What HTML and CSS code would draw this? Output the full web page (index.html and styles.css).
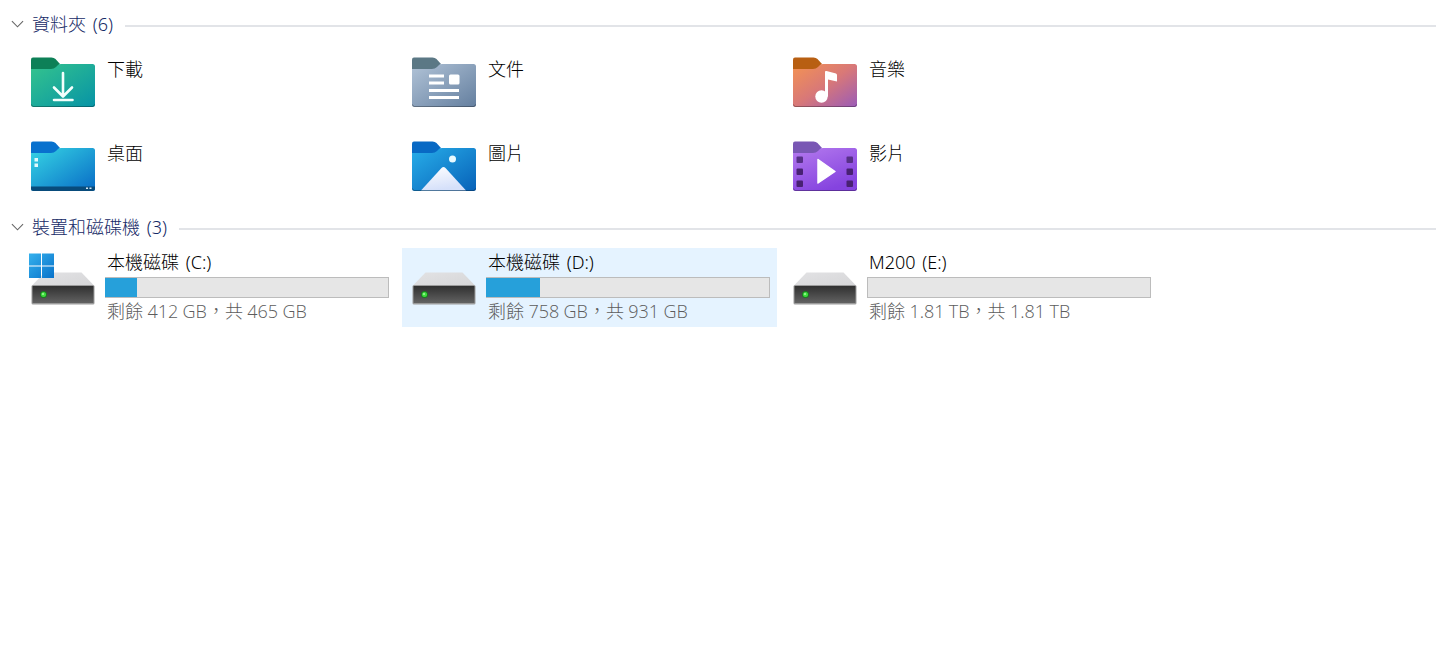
FILE: index.html
```html
<!DOCTYPE html>
<html lang="zh-Hant">

<head>
    <meta charset="utf-8">
    <title>本機</title>
    <meta name="viewport" content="width=device-width, initial-scale=1">
    <link rel="stylesheet" href="styles.css">
</head>

<body>
    <!-- shapes and gradients used by several icons -->
    <svg class="defs" width="0" height="0">
        <defs>
            <linearGradient id="green" x1="0" y1="0" x2="1" y2="1">
                <stop offset="0" stop-color="#34c48d" />
                <stop offset="1" stop-color="#0793a6" />
            </linearGradient>
            <linearGradient id="gray" x1="0" y1="0" x2="1" y2="1">
                <stop offset="0" stop-color="#b1c3d7" />
                <stop offset="1" stop-color="#647f9f" />
            </linearGradient>
            <linearGradient id="orange" x1="0" y1="0" x2="1" y2="1">
                <stop offset="0" stop-color="#f49352" />
                <stop offset="0.5" stop-color="#d87878" />
                <stop offset="1" stop-color="#9a5bb8" />
            </linearGradient>
            <linearGradient id="cyan" x1="0" y1="0" x2="1" y2="1">
                <stop offset="0" stop-color="#36d5e4" />
                <stop offset="1" stop-color="#086bc6" />
            </linearGradient>
            <linearGradient id="blue" x1="0" y1="0" x2="1" y2="1">
                <stop offset="0" stop-color="#28aee9" />
                <stop offset="1" stop-color="#0761b8" />
            </linearGradient>
            <linearGradient id="purple" x1="0" y1="0" x2="0.5" y2="1">
                <stop offset="0" stop-color="#b47aee" />
                <stop offset="1" stop-color="#8543df" />
            </linearGradient>
            <linearGradient id="snow" x1="0" y1="0" x2="0.3" y2="1">
                <stop offset="0" stop-color="#ffffff" />
                <stop offset="1" stop-color="#d5e0fa" />
            </linearGradient>
            <linearGradient id="metal" x1="0" y1="0" x2="0" y2="1">
                <stop offset="0" stop-color="#303030" />
                <stop offset="1" stop-color="#626262" />
            </linearGradient>
            <linearGradient id="lid" x1="0" y1="0" x2="1" y2="1">
                <stop offset="0" stop-color="#e2e2e4" />
                <stop offset="1" stop-color="#d6d6d8" />
            </linearGradient>
            <linearGradient id="win" x1="0" y1="0" x2="1" y2="1">
                <stop offset="0" stop-color="#35b1ed" />
                <stop offset="1" stop-color="#0872ca" />
            </linearGradient>
            <path id="tab" d="M0 17V7.500Q0 5.500 2 5.500H20.500Q23 5.500 24.500 7L29 12L24 17Z" />
            <path id="front" d="M0 17H20Q23 17 25 15L27.500 12.500Q28.500 12 30 12H61.500Q64 12 64 14.500V52.500Q64 55 61.500 55H2.500Q0 55 0 52.500Z" />
            <path id="edge" d="M0.500 52.500Q0.500 54.500 2.500 54.500H61.500Q63.500 54.500 63.500 52.500" fill="none" stroke="#000" stroke-opacity="0.3" />
            <g id="drive">
                <path d="M13.500 17.500H50.500L63 30.500H1Z" fill="url(#lid)" />
                <rect x="0.500" y="30" width="63" height="19.500" rx="1.500" fill="#9b9b9b" />
                <rect x="1.500" y="31" width="61" height="17" rx="0.500" fill="url(#metal)" />
                <circle cx="12.500" cy="39.500" r="3.500" fill="#1c7a22" />
                <circle cx="12.500" cy="39.500" r="2.500" fill="#3ddd3c" />
                <circle cx="12" cy="39" r="1" fill="#a5f79c" />
            </g>
        </defs>
    </svg>

    <section class="group">
        <h2 class="group-title">
            <svg class="chevron" viewBox="0 0 14 8"><path d="M1 1L7 7L13 1" /></svg>
            <span>資料夾 (6)</span>
        </h2>
        <div class="tiles">
            <div class="tile folder">
                <svg class="icon" viewBox="0 0 64 64">
                    <use href="#tab" fill="#0d8057" />
                    <use href="#front" fill="url(#green)" />
                    <use href="#edge" />
                    <path d="M32 21V44M23 35.500L32 44.500L41 35.500M23 48H41.500" fill="none" stroke="#f4fffc" stroke-width="2.600" stroke-linecap="round" stroke-linejoin="round" />
                </svg>
                <span class="name">下載</span>
            </div>
            <div class="tile folder">
                <svg class="icon" viewBox="0 0 64 64">
                    <use href="#tab" fill="#5b7885" />
                    <use href="#front" fill="url(#gray)" />
                    <use href="#edge" />
                    <path d="M17 24H32M17 31H32M17 38.500H47M17 45.500H47" fill="none" stroke="#fff" stroke-width="3" />
                    <rect x="37" y="22.500" width="10.500" height="10" rx="1.500" fill="#fff" />
                </svg>
                <span class="name">文件</span>
            </div>
            <div class="tile folder">
                <svg class="icon" viewBox="0 0 64 64">
                    <use href="#tab" fill="#b85f12" />
                    <use href="#front" fill="url(#orange)" />
                    <use href="#edge" />
                    <path d="M32 20Q32 18.500 33.500 19L43 21.500Q44 22 44 23V29.500L35 27.500V44.500H32Z" fill="#fff" />
                    <circle cx="28.500" cy="44.500" r="6.200" fill="#fff" />
                </svg>
                <span class="name">音樂</span>
            </div>
            <div class="tile folder">
                <svg class="icon" viewBox="0 0 64 64">
                    <use href="#tab" fill="#0871ce" />
                    <use href="#front" fill="url(#cyan)" />
                    <path d="M0 50.500H64V52.500Q64 55 61.500 55H2.500Q0 55 0 52.500Z" fill="#084b7b" />
                    <path d="M3.500 22H7V25.500H3.500ZM3.500 27.500H7V31H3.500Z" fill="#e2fbfd" />
                    <path d="M55 51.500H57V53H55ZM58.500 51.500H60.500V53H58.500Z" fill="#d5e8f5" />
                </svg>
                <span class="name">桌面</span>
            </div>
            <div class="tile folder">
                <svg class="icon" viewBox="0 0 64 64">
                    <use href="#tab" fill="#0869c4" />
                    <use href="#front" fill="url(#blue)" />
                    <path d="M9 54.500L29.500 32Q31.500 30 33.500 32L54 54.500Z" fill="url(#snow)" />
                    <circle cx="40.500" cy="23" r="3.500" fill="#e9faff" />
                    <use href="#edge" />
                </svg>
                <span class="name">圖片</span>
            </div>
            <div class="tile folder">
                <svg class="icon" viewBox="0 0 64 64">
                    <use href="#tab" fill="#7957b4" />
                    <use href="#front" fill="url(#purple)" />
                    <use href="#edge" />
                    <g fill="#482173">
                        <rect x="3.500" y="20.500" width="6.500" height="6.500" rx="1" fill="#573088" />
                        <rect x="3.500" y="32.500" width="6.500" height="6.500" rx="1" />
                        <rect x="3.500" y="44.500" width="6.500" height="6.500" rx="1" />
                        <rect x="53.500" y="20.500" width="6.500" height="6.500" rx="1" fill="#573088" />
                        <rect x="53.500" y="32.500" width="6.500" height="6.500" rx="1" />
                        <rect x="53.500" y="44.500" width="6.500" height="6.500" rx="1" />
                    </g>
                    <path d="M25 23.500L42 35.500L25 47Z" fill="#fff" stroke="#fff" stroke-width="1.500" stroke-linejoin="round" />
                </svg>
                <span class="name">影片</span>
            </div>
        </div>
    </section>

    <section class="group">
        <h2 class="group-title">
            <svg class="chevron" viewBox="0 0 14 8"><path d="M1 1L7 7L13 1" /></svg>
            <span>裝置和磁碟機 (3)</span>
        </h2>
        <div class="tiles">
            <div class="tile">
                <svg class="icon" viewBox="0 0 64 64">
                    <use href="#drive" />
                    <path d="M-2 -1.500H10V10.500H-2ZM11 -1.500H23V10.500H11ZM-2 11.500H10V23H-2ZM11 11.500H23V23H11Z" fill="url(#win)" />
                </svg>
                <div class="drive-info">
                    <span class="name">本機磁碟 (C:)</span>
                    <div class="bar"><div class="used" style="width: 32px"></div></div>
                    <span class="space">剩餘 412 GB，共 465 GB</span>
                </div>
            </div>
            <div class="tile selected">
                <svg class="icon" viewBox="0 0 64 64"><use href="#drive" /></svg>
                <div class="drive-info">
                    <span class="name">本機磁碟 (D:)</span>
                    <div class="bar"><div class="used" style="width: 54px"></div></div>
                    <span class="space">剩餘 758 GB，共 931 GB</span>
                </div>
            </div>
            <div class="tile">
                <svg class="icon" viewBox="0 0 64 64"><use href="#drive" /></svg>
                <div class="drive-info">
                    <span class="name">M200 (E:)</span>
                    <div class="bar"></div>
                    <span class="space">剩餘 1.81 TB，共 1.81 TB</span>
                </div>
            </div>
        </div>
    </section>
</body>

</html>
```

FILE: styles.css
```css
* {
    box-sizing: border-box;
}

body {
    margin: 0;
    padding: 5px 11px 0;
    background-color: #fff;
    color: #000;
    font-family: "Noto Sans", "Noto Sans CJK TC", sans-serif;
    font-size: 18px;
    font-weight: 300;
    line-height: 24px;
}

.defs {
    position: absolute;
}

.group-title {
    display: flex;
    align-items: center;
    height: 38px;
    margin: 0 0 2px;
    color: #152a66;
    font-size: inherit;
    font-weight: inherit;
    word-spacing: 2px;
}

.group-title::after {
    content: "";
    flex: 1;
    height: 2px;
    margin: 3px 0 0 12px;
    background-color: #e2e4e8;
}

.chevron {
    width: 13px;
    height: 8px;
    margin-right: 8px;
    fill: none;
    stroke: #666;
    stroke-width: 1.2;
}

.tiles {
    display: grid;
    grid-template-columns: repeat(3, 375px);
    gap: 5px 6px;
    padding-left: 10px;
}

.tile {
    display: flex;
    height: 79px;
    padding: 7px 7px 0 10px;
}

.selected {
    background-color: #e5f3ff;
}

.icon {
    flex: none;
    width: 64px;
    height: 64px;
    margin-right: 10px;
    overflow: visible;
}

.name,
.space {
    display: block;
    margin-left: 2px;
    white-space: nowrap;
}

.name {
    word-spacing: 2px;
}

.folder .name {
    margin-top: 5px;
}

.drive-info {
    flex: 1;
    margin-top: -5px;
}

.bar {
    height: 21px;
    margin: 3px 0 1px;
    background-color: #e6e6e6;
    border: 1px solid #bcbcbc;
}

.used {
    height: 19px;
    margin-left: -1px;
    background-color: #26a0da;
}

.space {
    color: #5c5c5c;
    font-family: "Open Sans", "Noto Sans CJK TC", sans-serif;
    word-spacing: -0.3px;
}
```
